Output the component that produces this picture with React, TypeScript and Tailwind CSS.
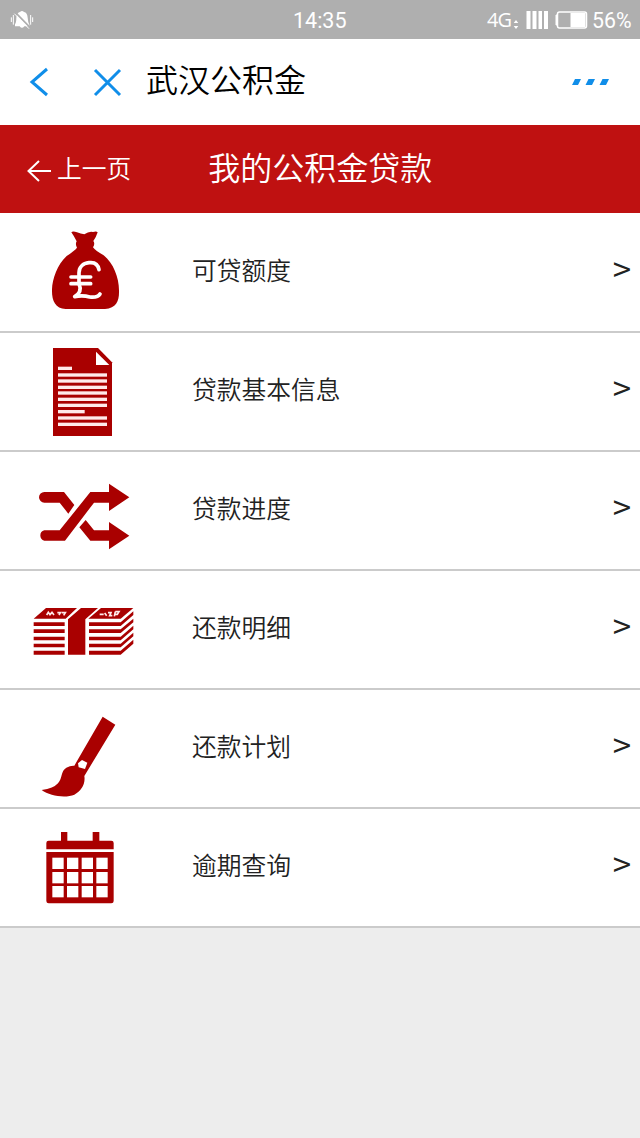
import type { ReactNode } from 'react'

const font = "font-['Noto_Sans_CJK_SC',sans-serif]"

interface MenuItem {
  label: string
  // vertical origin of the drawing inside the row
  viewBox: string
  icon: ReactNode
}

const noteLines = [107, 125, 144, 161, 180, 198]

const items: MenuItem[] = [
  {
    label: '可贷额度',
    viewBox: '0 -18 390 357',
    icon: (
      <>
        <path d="M154 37Q158 32 171 37Q182 42 193 43Q207 33 219 36Q229 32 233 37Q229 50 220 63Q226 71 219 82Q226 92 251 106C280 129 297 173 297 211C298 242 290 264 255 267H137C105 266 95 241 96 208C97 177 112 133 140 108Q164 92 171 83Q165 72 170 64Q162 48 154 37Z" />
        <g fill="none" stroke="#fff" strokeWidth="11" strokeLinecap="round" strokeLinejoin="round">
          <path d="M237 149C234 132 223 126 207 128C188 130 177 142 177 158V191C184 207 179 221 164 230Q188 225 209 231Q233 234 240 222" />
          <path d="M153 171H212M153 191H212" />
        </g>
      </>
    ),
  },
  {
    label: '贷款基本信息',
    viewBox: '0 -15 390 357',
    icon: (
      <>
        <path d="M99 30H234L276 73V294H99Z" />
        <path d="M228 41V81H268Z" fill="#fff" />
        <g fill="#ffeaea">
          <rect x="114" y="86" width="42" height="10" />
          {noteLines.map((y) => (
            <rect key={y} x="114" y={y - 1} width="147" height="10" />
          ))}
          <rect x="114" y="216" width="80" height="10" />
          <rect x="114" y="235" width="147" height="10" />
          <rect x="114" y="254" width="147" height="10" />
        </g>
      </>
    ),
  },
  {
    label: '贷款进度',
    viewBox: '0 -24 390 357',
    icon: (
      <>
        <path d="M73 96H132L163 135L145 161L119 128H73A16 16 0 0 1 73 96Z" />
        <path d="M73 211H119L211 96H267V71L328 112L267 153V128H222L135 242H73A16 16 0 0 1 73 211Z" />
        <path d="M178 202L197 180L222 211H267V186L328 227L267 268V242H211Z" />
      </>
    ),
  },
  {
    label: '还款明细',
    viewBox: '0 -57 390 357',
    icon: (
      <>
        <path d="M41 86L78 54H171L137 86Z" />
        <path d="M144 88L183 54H234L196 88V194H144Z" />
        <path d="M205 86L243 54H340L302 86Z" />
        <path d="M41 97H134V108H41ZM41 118H134V129H41ZM41 140H134V151H41ZM41 161H134V172H41ZM41 182H134V194H41Z" />
        <path d="M207 97H302L340 64V75L302 108H207ZM207 118H302L340 86V97L302 129H207ZM207 140H302L340 107V118L302 151H207ZM207 161H302L340 128V139L302 172H207ZM207 182H302L340 149V161L302 194H207Z" />
        <g fill="none" stroke="#ffeaea" strokeWidth="5">
          <path d="M80 75L85 67L90 74L96 67L102 75M112 68H121L117 75M125 68H136L131 76" />
          <path d="M239 73H251M254 69L260 77M264 68H273L269 77H277M286 65L283 79M286 65H297L292 73H285" />
        </g>
      </>
    ),
  },
  {
    label: '还款计划',
    viewBox: '0 -30 390 357',
    icon: (
      <>
        <path d="M248 50L286 74L193 228C197 252 184 273 163 284C136 295 89 288 65 270Q101 265 114 250C128 234 122 213 139 203Q151 196 163 197Z" />
        <path d="M186 180L202 188L195 207L176 202L174 190Z" fill="#fff" />
      </>
    ),
  },
  {
    label: '逾期查询',
    viewBox: '0 -18 390 357',
    icon: (
      <>
        <path d="M86 77H123V51H142V77H218V51H238V77H274Q281 77 281 84V103H79V84Q79 77 86 77Z" />
        <path d="M79 111H281V258Q281 265 274 265H86Q79 265 79 258Z" />
        <g fill="#fff">
          {[128, 171, 213].map((y) =>
            [97, 141, 185, 229].map((x) => (
              <rect key={`${x}-${y}`} x={x} y={y} width="34" height="34" />
            )),
          )}
        </g>
      </>
    ),
  },
]

function StatusBar() {
  return (
    <div className="flex h-[39px] items-center bg-[#afafaf] font-[Roboto,sans-serif] text-white">
      <svg className="ml-[10px]" width="24" height="20" viewBox="0 0 72 60" fill="#fff">
        <path d="M15 42Q19 38 19 23Q21 8 30 6Q36 0 42 6Q52 8 53 23Q54 38 58 44V49H43Q36 58 29 49H15Z" />
        <path d="M10 15V44M4 22V36M62 15V44M68 22V36" stroke="#fff" strokeWidth="3" />
        <path d="M16 7L60 52" stroke="#afafaf" strokeWidth="5" />
        <path d="M13 11L57 56" stroke="#fff" strokeWidth="3" />
      </svg>
      <span className="ml-[259px] w-[54px] pt-[3px] text-[21.5px] leading-none">14:35</span>
      <span className="ml-[140px] w-[26px] font-['Open_Sans',sans-serif] text-[20px] leading-none font-medium tracking-[-1px]">4G</span>
      <svg width="75" height="24" viewBox="0 0 75 24" fill="#fff">
        <path d="M0.7 15L3 12L5.3 15ZM0.7 18H5.3L3 21Z" />
        <path d="M13.500 3H17.500V21H13.500ZM19.500 3H23.500V21H19.500ZM25.500 3H29V21H25.500ZM31 3H35V21H31Z" />
        <rect x="44.5" y="4" width="29" height="16" rx="2" fill="none" stroke="#fff" strokeWidth="1.5" />
        <path d="M44 7H43V17H44Z" stroke="#fff" />
        <rect x="57.5" y="5" width="15" height="14" />
      </svg>
      <span className="ml-[4px] pt-[3px] text-[21.3px] leading-none">56%</span>
    </div>
  )
}

function NavBar() {
  return (
    <div className="flex h-[86px] items-center bg-white">
      <svg className="ml-[28px]" width="96" height="32" viewBox="0 0 96 32" fill="none" stroke="#108ee9" strokeWidth="3">
        <path d="M19 3L4 16L19 29" />
        <path d="M67 4L92 29M92 4L67 29" />
      </svg>
      <h1 className="ml-[22px] pb-[8px] text-[32px] leading-none font-[350] text-black">武汉公积金</h1>
      <svg className="ml-auto mr-[30px]" width="40" height="10" viewBox="0 0 40 10" fill="#108ee9">
        <path d="M5 2H11L8 8H2ZM18.500 2H25L22 8H15.500ZM32.500 2H39L36 8H29.500Z" />
      </svg>
    </div>
  )
}

export default function App() {
  return (
    <div className={`h-[1138px] w-[640px] overflow-hidden bg-[#ededed] ${font}`}>
      <StatusBar />
      <NavBar />

      <div className="flex h-[88px] items-center bg-[#bf1111] text-white">
        <svg className="mt-[4px] ml-[26px]" width="26" height="24" viewBox="0 0 26 24" fill="none" stroke="#fff" strokeWidth="2">
          <path d="M25 12H2M13 2L2.500 12L13 22" />
        </svg>
        <span className="ml-[5px] pb-[3px] text-[24.75px] leading-none font-[350]">上一页</span>
        <h2 className="ml-[77px] pb-[7px] text-[32px] leading-none font-[350]">我的公积金贷款</h2>
      </div>

      <ul className="border-t border-white">
        {items.map((item) => (
          <li key={item.label} className="flex h-[119px] items-center border-b-2 border-[#cbcbcb] bg-white pr-[9px] pl-[20px] text-[#222]">
            <svg className="shrink-0 self-start" width="130" height="119" viewBox={item.viewBox} fill="#a90000">
              {item.icon}
            </svg>
            <span className="ml-[42px] pb-[6px] text-[24.75px] leading-none font-[350]">{item.label}</span>
            <span className="ml-auto pb-[9px] text-[33px] leading-none">&gt;</span>
          </li>
        ))}
      </ul>
    </div>
  )
}
